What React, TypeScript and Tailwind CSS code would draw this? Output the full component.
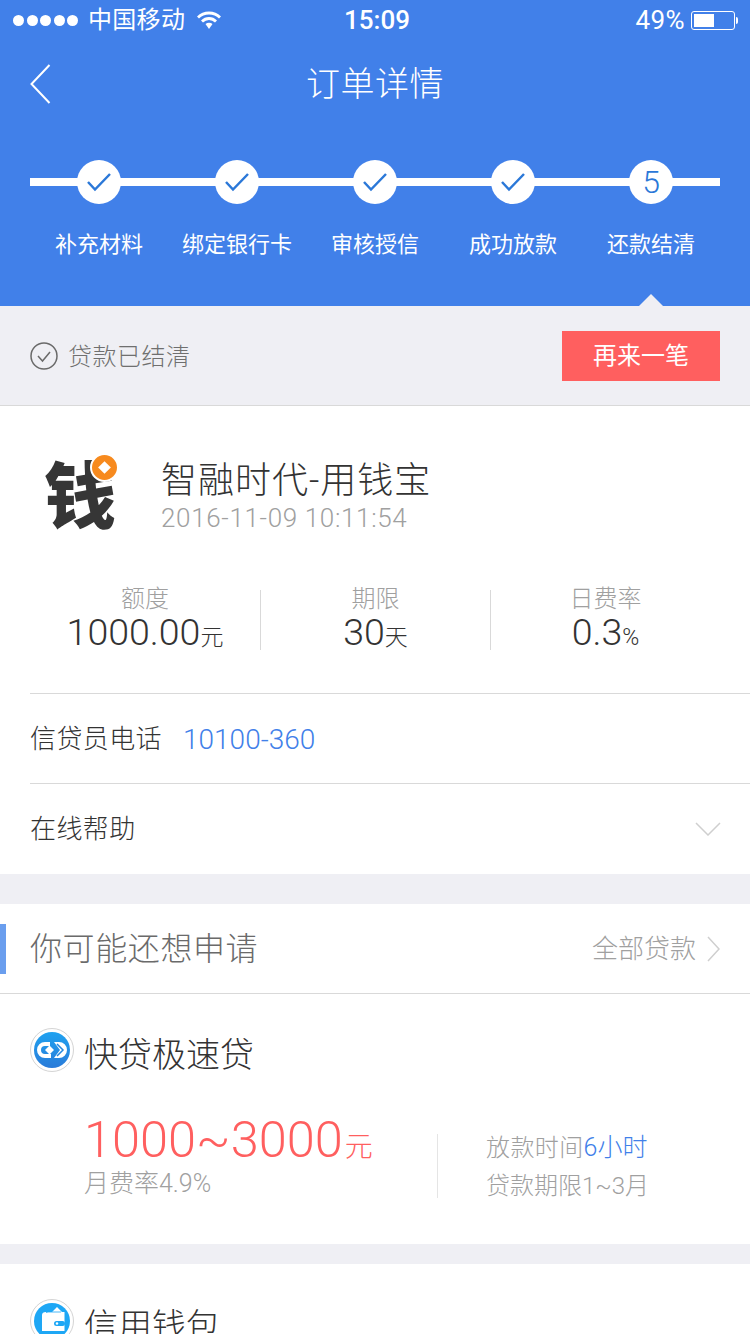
import React from 'react';

const steps = ['补充材料', '绑定银行卡', '审核授信', '成功放款', '还款结清'];

const StatusBar = () => (
  <div className="h-10 pl-[13px] pr-[12px] flex items-center text-white text-[24px] relative">
    <div className="flex items-center gap-[2.5px]">
      {[0, 1, 2, 3, 4].map((i) => (
        <div key={i} className="w-[11px] h-[11px] rounded-full bg-white" />
      ))}
    </div>
    <span className="ml-[10px] leading-none tracking-[0.3px]">中国移动</span>
    <svg className="ml-[12px]" width="24" height="18" viewBox="0 0 24 18">
      <path d="M1 6.500C7 .5 17 .5 23 6.500" fill="none" stroke="white" strokeWidth="2.800" />
      <path d="M5 10.500C9 6.500 15 6.500 19 10.500" fill="none" stroke="white" strokeWidth="2.800" />
      <path d="M8.500 13L12 18L15.500 13C13.500 11.200 10.500 11.200 8.500 13Z" fill="white" />
    </svg>
    <span className="absolute left-[4px] right-0 text-center font-medium text-[26px] leading-none">15:09</span>
    <div className="ml-auto flex items-center">
      <span className="leading-none text-[26px] tracking-[0.4px]">49%</span>
      <div className="ml-[6px] w-[44px] h-[19px] border border-white rounded-[3px] p-[2px]">
        <div className="w-[20px] h-full bg-white" />
      </div>
      <div className="ml-[1px] w-[2px] h-[7px] bg-white rounded-r-full" />
    </div>
  </div>
);

const Header = () => (
  <header className="bg-[#4180e9] h-[306px] flex flex-col relative">
    <StatusBar />
    <div className="h-[88px] flex items-center justify-center relative">
      <svg className="absolute left-[30px] top-[24px]" width="21" height="40" viewBox="0 0 21 40">
        <path d="M19.500 1L1.500 20L19.500 39" fill="none" stroke="white" strokeWidth="2" />
      </svg>
      <span className="text-white text-[34px] font-light leading-none tracking-[0.5px]">订单详情</span>
    </div>
    <div className="relative mx-[30px] mt-[32px]">
      <div className="absolute left-0 right-0 top-[18px] h-2 bg-white" />
      <div className="relative grid grid-cols-5">
        {steps.map((label, i) => (
          <div key={label} className="flex flex-col items-center">
            <div className="w-[44px] h-[44px] rounded-full bg-white flex items-center justify-center">
              {i < 4 ? (
                <svg width="26" height="20" viewBox="0 0 26 20">
                  <path d="M2 10L9 17.500L24 2" fill="none" stroke="#2b78d8" strokeWidth="2.500" />
                </svg>
              ) : (
                <span className="text-[#2b78d8] text-[32px] leading-none font-light">5</span>
              )}
            </div>
            <span className="mt-[30px] text-white text-[22px] leading-none whitespace-nowrap">{label}</span>
          </div>
        ))}
      </div>
    </div>
    <div className="absolute bottom-0 left-[639px] w-0 h-0 border-l-[12px] border-r-[12px] border-b-[12px] border-l-transparent border-r-transparent border-b-[#efeff4]" />
  </header>
);

const Stat = ({ label, value, unit, border }: { label: string; value: string; unit: string; border?: boolean }) => (
  <div className={`h-[60px] flex flex-col items-center ${border ? 'border-l border-[#d9d9d9]' : ''}`}>
    <span className="-mt-[3px] text-[24px] leading-none text-[#a0a0a0] font-light">{label}</span>
    <div className="mt-[3px] flex items-baseline leading-none text-[#333]">
      <span className="text-[37.5px] leading-none font-light">{value}</span>
      <span className="text-[23px] leading-none font-light">{unit}</span>
    </div>
  </div>
);

const ProductIcon = ({ children }: { children: React.ReactNode }) => (
  <div className="w-[44px] h-[44px] rounded-full border border-[#d4d4d4] flex items-center justify-center shrink-0">
    {children}
  </div>
);

export default function App() {
  return (
    <div
      className="w-[750px] h-[1334px] overflow-hidden bg-[#efeff4] relative"
      style={{ fontFamily: 'Roboto, "Noto Sans CJK SC", sans-serif' }}
    >
      <Header />

      <div className="h-[100px] pl-[30px] pr-[30px] flex items-center border-b border-[#d9d9d9]">
        <svg width="28" height="28" viewBox="0 0 28 28">
          <circle cx="14" cy="14" r="13" fill="none" stroke="#6a6a6a" strokeWidth="1.500" />
          <path d="M8 14L12.500 19L20 10" fill="none" stroke="#6a6a6a" strokeWidth="1.500" />
        </svg>
        <span className="ml-[10px] pt-[2px] text-[24px] leading-none text-[#6f6f6f] font-light tracking-[0.5px]">贷款已结清</span>
        <button className="ml-auto w-[158px] h-[50px] bg-[#ff5f5f] text-white text-[24px] leading-none">再来一笔</button>
      </div>

      <section className="bg-white h-[468px] flex flex-col">
        <div className="h-[147px] pl-[30px] pt-[36px] flex items-center relative">
          <div className="w-[100px] relative h-[100px] flex items-center justify-center">
            <span className="text-[#363636] text-[72px] font-black leading-none">钱</span>
            <div className="absolute left-[60px] top-[5px] w-[25px] h-[25px] rounded-full bg-[#f78a1e] border-2 border-white box-content flex items-center justify-center">
              <div className="w-[9px] h-[9px] bg-white rotate-45" />
            </div>
          </div>
          <div className="ml-[31px] pb-[2px] flex flex-col">
            <span className="text-[36px] leading-none text-[#333] font-light tracking-[1px]">智融时代-用钱宝</span>
            <span className="mt-[6px] text-[26px] leading-none text-[#a0a0a0] font-light tracking-[0.65px]">2016-11-09 10:11:54</span>
          </div>
        </div>

        <div className="grid grid-cols-3 mx-[30px] mt-[37px]">
          <Stat label="额度" value="1000.00" unit="元" />
          <Stat label="期限" value="30" unit="天" border />
          <Stat label="日费率" value="0.3" unit="%" border />
        </div>

        <div className="ml-[30px] mt-[43px] h-[90px] border-t border-[#d9d9d9] flex items-center">
          <span className="text-[26px] leading-none text-[#333] font-light tracking-[0.4px]">信贷员电话</span>
          <span className="ml-[21px] pt-[2px] text-[28px] leading-none text-[#4180e9] font-light">10100-360</span>
        </div>
        <div className="ml-[30px] pr-[29px] h-[91px] border-t border-[#d9d9d9] flex items-center justify-between">
          <span className="text-[26px] leading-none text-[#333] font-light tracking-[0.4px]">在线帮助</span>
          <svg width="26" height="14" viewBox="0 0 26 14">
            <path d="M1 1L13 13L25 1" fill="none" stroke="#cfcfcf" strokeWidth="1.500" />
          </svg>
        </div>
      </section>

      <section className="mt-[30px] bg-white">
        <div className="h-[90px] border-b border-[#d9d9d9] flex items-center pl-[30px] pr-[30px] relative">
          <div className="absolute left-0 top-[20px] w-[6px] h-[50px] bg-[#6a9eee]" />
          <span className="text-[32px] leading-none text-[#6a6a6a] font-light tracking-[0.6px]">你可能还想申请</span>
          <span className="ml-auto text-[26px] leading-none text-[#a0a0a0] font-light">全部贷款</span>
          <svg className="ml-[11px]" width="13" height="26" viewBox="0 0 13 26">
            <path d="M1 1L12 13L1 25" fill="none" stroke="#cfcfcf" strokeWidth="1.500" />
          </svg>
        </div>
        <div className="h-[250px] pl-[30px] flex flex-col">
          <div className="mt-[34px] flex items-center">
            <ProductIcon>
              <svg width="36" height="36" viewBox="0 0 36 36">
                <defs>
                  <linearGradient id="kd" x1="0" y1="0" x2="0" y2="1">
                    <stop offset="0" stopColor="#1fa2f0" />
                    <stop offset="1" stopColor="#2a7bd9" />
                  </linearGradient>
                </defs>
                <circle cx="18" cy="18" r="18" fill="url(#kd)" />
                <path d="M16 12H11A6 6 0 0 0 11 24H17" fill="none" stroke="white" strokeWidth="4" />
                <path d="M11 18L15.500 13.500L20 18L15.500 22.500Z" fill="white" />
                <path d="M20 10H25A8 8 0 0 1 25 26H20L26 18Z" fill="white" />
                <path d="M23 12L29 18L23 24" fill="none" stroke="#2488e0" strokeWidth="1.500" />
              </svg>
            </ProductIcon>
            <span className="ml-[10px] pt-[10px] text-[34px] leading-none text-[#333] font-light">快贷极速贷</span>
          </div>
          <div className="mt-[62px] flex items-center">
            <div className="w-[408px] h-[64px] pl-[54px] pb-[21px] flex flex-col justify-center border-r border-[#e5e5e5]">
              <div className="flex items-baseline leading-none text-[#ff5f5f] font-light">
                <span className="text-[50.5px] leading-none">1000~3000</span>
                <span className="ml-[2px] text-[28px] leading-none">元</span>
              </div>
              <span className="mt-[6px] text-[25px] leading-none text-[#a0a0a0] font-light">月费率4.9%</span>
            </div>
            <div className="ml-[48px] flex flex-col text-[24px] leading-none text-[#a0a0a0] font-light">
              <span className="tracking-[0.4px]">放款时间<span className="text-[#4180e9] text-[25px] tracking-normal">6小时</span></span>
              <span className="mt-[14px]">贷款期限1~3月</span>
            </div>
          </div>
        </div>
      </section>

      <section className="mt-[20px] bg-white h-[80px] pl-[30px] pt-[35px]">
        <div className="flex items-center">
          <ProductIcon>
            <svg width="36" height="36" viewBox="0 0 36 36">
              <circle cx="18" cy="18" r="18" fill="#1ea7f5" />
              <path d="M12 10L14 9H18L23 4L28 9H30.500V28H8V12Q8 9 12 9Z" fill="white" />
              <path d="M13 9H27" stroke="#1ea7f5" strokeWidth="0.800" />
              <rect x="20" y="18" width="11" height="5" rx="2.500" fill="#1ea7f5" />
              <circle cx="23" cy="20.500" r="1.200" fill="white" />
            </svg>
          </ProductIcon>
          <span className="ml-[10px] pt-[10px] text-[34px] leading-none text-[#333] font-light">信用钱包</span>
        </div>
      </section>
    </div>
  );
}
